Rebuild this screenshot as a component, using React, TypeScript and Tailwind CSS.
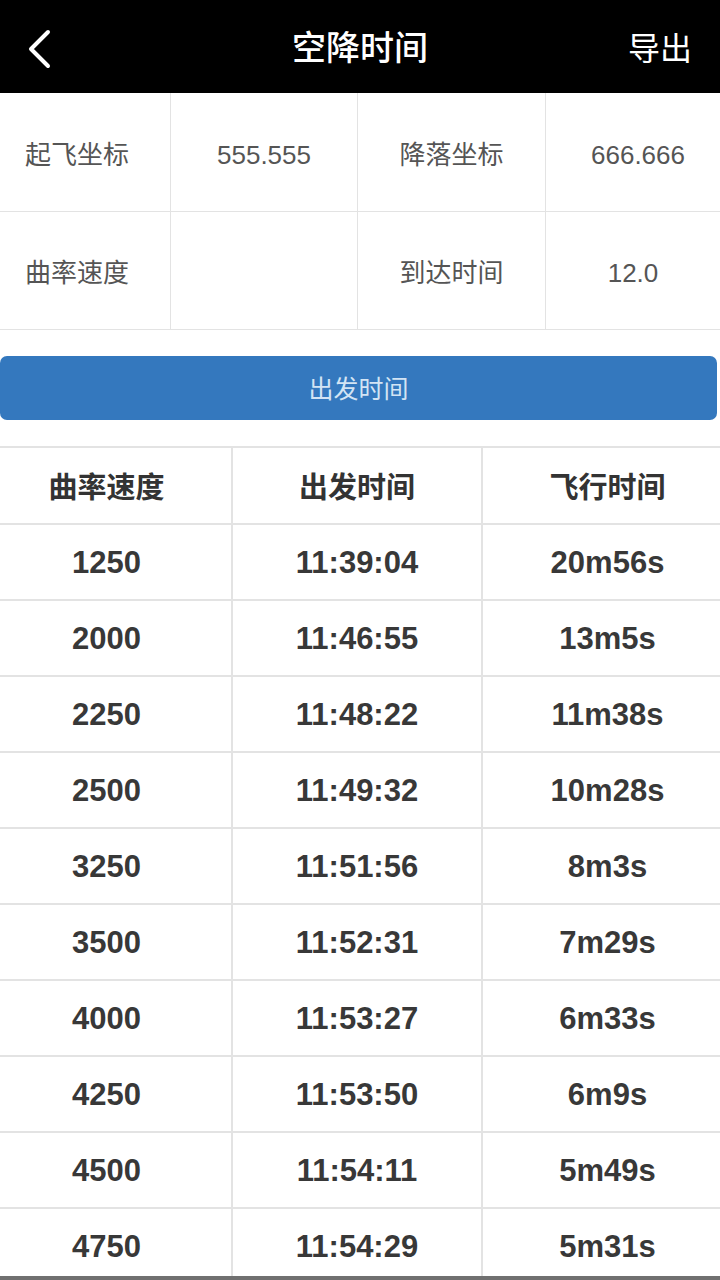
const ROWS = [
  ["1250", "11:39:04", "20m56s"],
  ["2000", "11:46:55", "13m5s"],
  ["2250", "11:48:22", "11m38s"],
  ["2500", "11:49:32", "10m28s"],
  ["3250", "11:51:56", "8m3s"],
  ["3500", "11:52:31", "7m29s"],
  ["4000", "11:53:27", "6m33s"],
  ["4250", "11:53:50", "6m9s"],
  ["4500", "11:54:11", "5m49s"],
  ["4750", "11:54:29", "5m31s"],
];

const font = { fontFamily: '"Liberation Sans", "Noto Sans CJK SC", sans-serif' };

const cellCls =
  "flex items-center justify-center border-r border-b border-[#e3e3e3] text-[#555] text-[26px] pt-[6px]";

// column alignment nudges, same for header and body
const colPad = ["pr-[18px]", "", "pl-[12px]"];

export default function App() {
  return (
    <div className="h-[1280px] w-[720px] overflow-hidden bg-white flex flex-col" style={font}>
      {/* header */}
      <div className="h-[93px] bg-black grid grid-cols-[1fr_auto_1fr] items-center px-[26px] pt-[4px] shrink-0">
        <svg width="28" height="40" viewBox="0 0 28 40" className="shrink-0">
          <polyline
            points="22,3 5,20 22,37"
            fill="none"
            stroke="#fff"
            strokeWidth="4"
            strokeLinecap="round"
            strokeLinejoin="round"
          />
        </svg>
        <div className="text-center text-white text-[34px] font-medium">空降时间</div>
        <div className="text-right text-white text-[32px] mr-[2px]">导出</div>
      </div>

      {/* coordinates grid */}
      <div className="grid grid-cols-[171px_187px_188px_1fr] grid-rows-[119px_118px] shrink-0">
        <div className={cellCls + " justify-start pl-[25px]"}>起飞坐标</div>
        <div className={cellCls}>555.555</div>
        <div className={cellCls}>降落坐标</div>
        <div className={cellCls + " border-r-0 pl-[10px]"}>666.666</div>
        <div className={cellCls + " justify-start pl-[25px]"}>曲率速度</div>
        <div className={cellCls}></div>
        <div className={cellCls}>到达时间</div>
        <div className={cellCls + " border-r-0"}>12.0</div>
      </div>

      {/* button */}
      <div className="pt-[26px] pb-[26px] pr-[3px] shrink-0">
        <button className="w-full h-[64px] rounded-[7px] bg-[#3478be] text-[#d3e4f4] text-[25px] pt-[3px]">
          出发时间
        </button>
      </div>

      {/* result table */}
      <div className="flex-1 overflow-hidden border-t-2 border-[#e3e3e3]">
        <div className="grid grid-cols-[233px_250px_1fr] h-[77px] border-b-2 border-[#e3e3e3]">
          {["曲率速度", "出发时间", "飞行时间"].map((h, i) => (
            <div
              key={h}
              className={
                "flex items-center justify-center pt-[6px] text-[29px] font-bold text-[#333] " +
                colPad[i] +
                (i < 2 ? " border-r-2 border-[#e3e3e3]" : "")
              }
            >
              {h}
            </div>
          ))}
        </div>
        {ROWS.map((r) => (
          <div key={r[0]} className="grid grid-cols-[233px_250px_1fr] h-[76px] border-b-2 border-[#e3e3e3]">
            {r.map((v, i) => (
              <div
                key={i}
                className={
                  "flex items-center justify-center pt-[2px] text-[31px] font-bold text-[#383838] " +
                  colPad[i] +
                  (i < 2 ? " border-r-2 border-[#e3e3e3]" : "")
                }
              >
                {v}
              </div>
            ))}
          </div>
        ))}
      </div>
      <div className="h-[4px] bg-[#707070] shrink-0" />
    </div>
  );
}
